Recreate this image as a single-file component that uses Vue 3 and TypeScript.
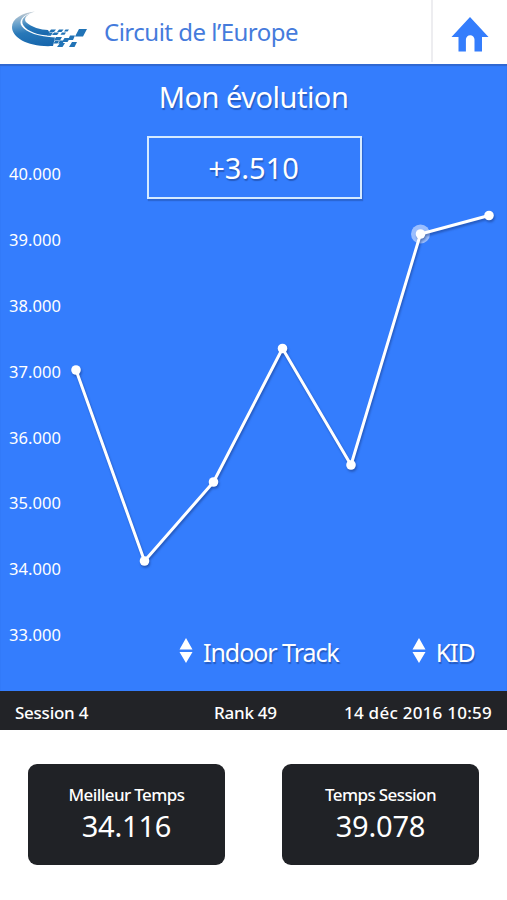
<script setup lang="ts">
interface Point {
  x: number
  y: number
  active?: boolean
}

const ticks: string[] = ['40.000', '39.000', '38.000', '37.000', '36.000', '35.000', '34.000', '33.000']

const points: Point[] = [
  { x: 76, y: 306 },
  { x: 144.5, y: 497 },
  { x: 213.5, y: 418 },
  { x: 282.5, y: 284.5 },
  { x: 351, y: 401 },
  { x: 420.5, y: 170, active: true },
  { x: 489, y: 151.5 },
]

const line: string = points.map((p) => `${p.x},${p.y}`).join(' ')
const highlighted: Point[] = points.filter((p) => p.active)

const filters = [
  { label: 'Indoor Track', name: 'track' },
  { label: 'KID', name: 'kid' },
]

const cards = [
  { label: 'Meilleur Temps', value: '34.116', name: 'best' },
  { label: 'Temps Session', value: '39.078', name: 'session' },
]
</script>

<template>
  <main class="screen">
    <header class="header">
      <svg class="logo" viewBox="0 0 80 40" width="80" height="40">
        <defs>
          <linearGradient id="swoosh" x1="0.35" y1="0" x2="0.5" y2="1">
            <stop offset="0" stop-color="#c3cad1" />
            <stop offset="0.3" stop-color="#6fa5cd" />
            <stop offset="0.6" stop-color="#2878b8" />
            <stop offset="1" stop-color="#1767ad" />
          </linearGradient>
        </defs>
        <path fill="url(#swoosh)" d="M25 .5C12 2 2 7.500 2 16C2 27 19 36.500 43 35L45 26.500C29 26 16 21 12 15.500C8 10 12 4 25 .5Z" />
        <path fill="url(#swoosh)" d="M25 .5C14 4 10 9 13.500 14.500C18 21 30 25 41 24.500L38 19C31 19 21 16 16.500 11.500C13 8 16 3.500 25 .5Z" />
        <g fill="#2173b6">
          <path d="M41 18.500h5l-2 2.500h-5zM49 18.500h4.500l-2 2.500h-4.500zM55.500 18.500h3.500l-1.500 2h-3.500zM44 21.500h5l-2 2.500h-5zM52 21.500h4l-1.500 2.300h-4zM39 21.500h4l-2 3h-4z" />
          <path d="M69 18h8l-4 7.500h-8zM60 24.500h5l-2 4.500h-5zM46 26h6l-2 3.500h-6zM54.500 27h5.500l-2.500 4h-5.500zM50 29.500h4.500l-2 3h-4.500zM45 30h4l-1.500 2.500h-4zM50 32h5l-2.500 4h-5.500zM62 31h5l-2.500 5h-5.500z" />
        </g>
      </svg>
      <h1 class="brand">Circuit de l’Europe</h1>
      <button class="home" aria-label="Accueil">
        <svg viewBox="0 0 38 36" width="38" height="36">
          <path fill="#347dfc" d="M19 0 37.500 20H31V34.500H23.500V22.500A4.300 4.300 0 0 0 14.900 22.500V34.500H7.500V20H.5Z" />
        </svg>
      </button>
    </header>

    <section class="chart">
      <svg class="plot" viewBox="0 0 507 627" width="507" height="627">
        <circle v-for="p in highlighted" :key="p.x" class="halo" :cx="p.x" :cy="p.y" r="9.500" />
        <g class="series">
          <polyline :points="line" />
          <circle v-for="p in points" :key="p.x" :cx="p.x" :cy="p.y" r="4.800" />
        </g>
      </svg>
      <div class="content">
        <h2 class="title">Mon évolution</h2>
        <div class="delta"><span>+3.510</span></div>
        <div class="filters">
          <div v-for="f in filters" :key="f.name" class="filter" :class="f.name">
            <svg viewBox="0 0 14 26" width="14" height="26">
              <path fill="#fff" d="M7 0 13.500 11.500H.5ZM.5 14H13.500L7 25Z" />
            </svg>
            <span>{{ f.label }}</span>
          </div>
        </div>
      </div>
      <ul class="axis">
        <li v-for="t in ticks" :key="t">{{ t }}</li>
      </ul>
    </section>

    <div class="status">
      <span class="session-no">Session 4</span>
      <span class="rank">Rank 49</span>
      <span class="date">14 déc 2016 10:59</span>
    </div>

    <section class="cards">
      <article v-for="c in cards" :key="c.name" class="card" :class="c.name">
        <span class="card-label">{{ c.label }}</span>
        <span class="card-value">{{ c.value }}</span>
      </article>
    </section>
  </main>
</template>

<style>
body {
  margin: 0;
  background: #fff;
}
</style>

<style scoped>
.screen {
  width: 507px;
  height: 900px;
  overflow: hidden;
  background: #fff;
  color: #fff;
  font-family: "Noto Sans", "Open Sans", sans-serif;
  white-space: nowrap;
}
.header {
  display: flex;
  height: 64px;
}
.logo {
  margin: 11px 0 0 10px;
  flex: none;
}
.brand {
  margin: 0 auto 0 14px;
  font-size: 24px;
  font-weight: 400;
  line-height: 64px;
  letter-spacing: -0.5px;
  color: #457bdc;
}
.home {
  display: flex;
  align-items: flex-start;
  width: 76px;
  height: 62px;
  box-sizing: border-box;
  padding: 17px 0 0 18px;
  border: 0;
  border-left: 2px solid #ededf0;
  background: none;
}
.chart {
  display: grid;
  height: 627px;
  background: #347dfd;
  box-shadow: inset 0 2px 1px #3068d0;
}
.plot,
.content,
.axis {
  grid-area: 1 / 1;
}
.series {
  fill: #fff;
  filter: drop-shadow(1px 2px 1px rgba(20, 50, 120, 0.5));
}
.series polyline {
  fill: none;
  stroke: #fff;
  stroke-width: 3;
  stroke-linejoin: round;
}
.halo {
  fill: rgba(255, 255, 255, 0.5);
}
.content {
  display: flex;
  flex-direction: column;
  align-items: center;
  text-shadow: 1px 2px 1px rgba(20, 50, 120, 0.45);
}
.title {
  margin: 13px 0 0;
  font-size: 29px;
  font-weight: 400;
  line-height: 40px;
  letter-spacing: -0.5px;
}
.delta {
  box-sizing: border-box;
  width: 215px;
  height: 63px;
  margin: 19px 0 0 2px;
  border: 2px solid #d5eaff;
  text-align: center;
  font-size: 29px;
  line-height: 59px;
  box-shadow: 1px 2px 1px rgba(20, 50, 120, 0.3);
}
.delta span {
  margin-right: 2px;
}
.filters {
  display: flex;
  width: 100%;
  margin-top: 434px;
  font-size: 25px;
  line-height: 38px;
}
.filter {
  display: flex;
  align-items: center;
  gap: 10px;
  padding-left: 179px;
  letter-spacing: -1.05px;
}
.filter svg {
  margin-top: -3px;
}
.kid {
  padding-left: 73px;
}
.axis {
  margin: 77px 0 0 9px;
  padding: 0;
  justify-self: start;
  list-style: none;
  font-size: 16.500px;
  letter-spacing: 0.05px;
}
.axis li {
  height: 65.900px;
  line-height: 66px;
}
.status {
  display: grid;
  grid-template-columns: 199px 1fr auto;
  height: 39px;
  padding: 0 15px;
  background: #222327;
  font-size: 17px;
  font-weight: 500;
  line-height: 43px;
  letter-spacing: -0.25px;
}
.date {
  letter-spacing: 0.25px;
}
.cards {
  display: flex;
  gap: 57px;
  padding: 34px 28px 0;
}
.card {
  display: flex;
  flex-direction: column;
  align-items: center;
  width: 197px;
  height: 101px;
  border-radius: 9px;
  background: #202226;
}
.card-label {
  margin-top: 19px;
  font-size: 17px;
  font-weight: 500;
  line-height: 24px;
  letter-spacing: -0.6px;
}
.card-value {
  font-size: 29px;
  line-height: 38px;
  letter-spacing: -0.2px;
}
</style>
